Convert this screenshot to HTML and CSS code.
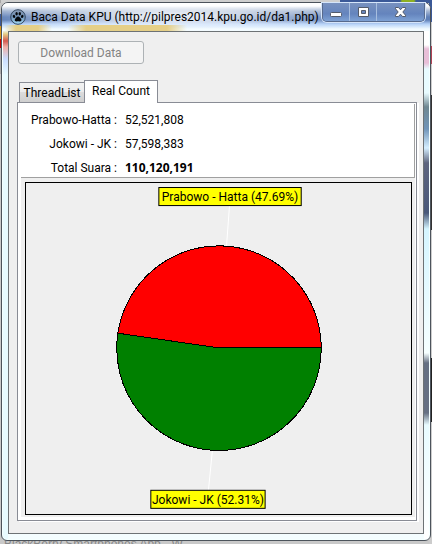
FILE: index.html
```
<!DOCTYPE html>
<html lang="id">
<head>
<meta charset="utf-8">
<title>Baca Data KPU</title>
<link rel="stylesheet" href="styles.css">
</head>
<body>
<div class="backdrop-text">BlackBerry Smartphones App - W</div>
<main class="window">
  <header class="titlebar">
    <svg class="app-icon" viewBox="0 0 16 16" aria-hidden="true">
      <defs><linearGradient id="disc" x1="0" y1="0" x2="0" y2="1"><stop offset="0" stop-color="#8b9cb5"/><stop offset=".5" stop-color="#6f91b8"/><stop offset="1" stop-color="#a8e0fb"/></linearGradient></defs>
      <circle cx="8" cy="8" r="7.3" fill="url(#disc)" stroke="#33475f" stroke-width="1"/>
      <g fill="#05080c"><ellipse cx="4" cy="7.4" rx="1.2" ry="1.6" transform="rotate(-25 4 7.4)"/><ellipse cx="6.6" cy="4.8" rx="1.2" ry="1.8"/><ellipse cx="9.8" cy="4.8" rx="1.2" ry="1.8"/><ellipse cx="12.2" cy="7.4" rx="1.2" ry="1.6" transform="rotate(25 12.2 7.4)"/><path d="M8.1 7.4c1.5 0 1.8 1.3 2.7 2.1 1.3 1.2.6 3.1-.9 2.9-1.3-.3-2.3-.3-3.6 0-1.5.2-2.200-1.700-.9-2.900.9-.8 1.200-2.100 2.700-2.100z"/></g>
    </svg>
    <h1 class="title">Baca Data KPU (http://pilpres2014.kpu.go.id/da1.php)</h1>
    <div class="controls">
      <button class="control" aria-label="Minimize"><svg width="13" height="12" viewBox="0 0 13 12"><rect x=".5" y="6.500" width="11" height="4" rx="1" fill="#fff" stroke="#535b6b"/></svg></button>
      <button class="control" aria-label="Maximize"><svg width="13" height="12" viewBox="0 0 13 12"><path fill="#fff" stroke="#535b6b" fill-rule="evenodd" d="M1.500 1.500h10v9h-10zM4.500 4.500v3h4v-3z"/></svg></button>
      <button class="control close" aria-label="Close"><svg width="13" height="12" viewBox="0 0 13 12"><path fill="#fff" stroke="#535b6b" stroke-linejoin="round" d="M1.500 1.500h3l2 2.300 2-2.300h3v1.300L8.800 6l2.700 3.200v1.300h-3l-2-2.300-2 2.300h-3V9.200L4.200 6 1.500 2.800z"/></svg></button>
    </div>
  </header>
  <section class="client">
    <button class="download" disabled>Download Data</button>
    <div class="tabs" role="tablist">
      <button class="tab" role="tab" aria-selected="false">ThreadList</button>
      <button class="tab active" role="tab" aria-selected="true">Real Count</button>
    </div>
    <div class="panel" role="tabpanel">
      <dl class="totals">
        <dt>Prabowo-Hatta :</dt><dd>52,521,808</dd>
        <dt>Jokowi - JK :</dt><dd>57,598,383</dd>
        <dt>Total Suara :</dt><dd class="sum">110,120,191</dd>
      </dl>
      <div class="chart">
        <svg class="pie" viewBox="0 0 384 330">
          <path class="leader" d="M203 22L200 63M186 266L182 306"/>
          <g class="slices" shape-rendering="crispEdges">
            <path fill="#f00" d="M192.500 164.500H294.500A102 102 0 0 0 91.600 149.800Z"/>
            <path fill="#008000" d="M192.500 164.500L91.600 149.800A102 102 0 1 0 294.500 164.500Z"/>
          </g>
          <rect class="tag" x="132.500" y="4.500" width="142" height="18"/>
          <text class="tag-text" x="203.500" y="18">Prabowo - Hatta (47.69%)</text>
          <rect class="tag" x="124.500" y="306.500" width="114" height="18"/>
          <text class="tag-text" x="181.500" y="320">Jokowi - JK (52.31%)</text>
        </svg>
      </div>
    </div>
  </section>
</main>
</body>
</html>
```
FILE: styles.css
```
* { box-sizing: border-box; }
body {
  margin: 0;
  min-height: 100vh;
  padding: 2px 1px 4px;
  display: flex;
  position: relative;
  overflow: hidden;
  font: 12px/16px Roboto, "Open Sans", sans-serif;
  color: #000;
  background:
    linear-gradient(90deg, #a8a8a8 0 1px, #cfcfcf 1px 340px, #3b5998 340px 400px, #8eb021 402px 414px, #3b5998 416px) right 0 top 0 / 432px 3px no-repeat,
    linear-gradient(#3b5998 0 12px, #d99a20 12px 25px, #c00 25px 34px, #aaa 34px) left 0 top 14px / 3px 60px no-repeat,
    linear-gradient(#3b5998 0 22px, #ccc 22px 46px, #b14355 46px 64px, #ccc 64px 95px, #333 95px 230px, #ccc 230px 358px, #222 358px 422px, #ccc 422px) right / 3px 100% no-repeat,
    #c9c9c9;
}
.backdrop-text {
  position: absolute;
  left: 4px;
  bottom: -7px;
  font-family: "Liberation Sans", sans-serif;
  color: #888;
}
.window {
  flex: 1;
  min-width: 0;
  position: relative;
  display: flex;
  flex-direction: column;
  padding: 0 6px 6px;
  border: 1px solid #4c535b;
  border-radius: 7px 7px 6px 6px;
  box-shadow: inset 0 0 0 1px #f4ffff;
  background:
    linear-gradient(transparent 27px, #e5cf87 31px, #d45a50 38px, #f0b0a8 44px, #c9dcff 56px, #e8fbff 72px) left / 6px 100% no-repeat,
    linear-gradient(#fff 0 42px, #e8bfd8 46px 60px, #e8fbff 66px 90px, #6f8791 104px, #7094b8 126px, #d5eeff 145px, #5e657f 160px, #495879 210px, #d5f5ff 226px, #f6ffff 350px, #667083 360px 410px, #e8fbff 422px, #fff) right / 6px 100% no-repeat,
    #f4fdff;
}
.titlebar {
  display: flex;
  align-items: center;
  height: 28px;
  margin: 0 -6px;
  padding-left: 8px;
  border-radius: 6px 6px 0 0;
  background:
    linear-gradient(90deg, #e5cf8700 2px, #e5cf87 14px 36px, #e5cf8700 50px 66px, #e5cf87 84px 165px, #e5cf8700 185px) left bottom / 100% 6px no-repeat,
    radial-gradient(ellipse 180px 15px at 170px 14px, #ffffffd0 20%, #ffffff00) no-repeat,
    linear-gradient(#fff 0 3px, #a9bad5 8px, #5f80b8 14px 17px, #b5d2f8 21px, #f2fbff 26px);
}
.app-icon { width: 16px; height: 16px; flex: none; }
.title {
  flex: 1;
  min-width: 0;
  margin: 0 0 0 5px;
  font-size: 12px;
  font-weight: 400;
  line-height: 16px;
  white-space: nowrap;
}
.controls {
  position: absolute;
  top: 0;
  right: 5px;
  display: flex;
  height: 19px;
  border: 1px solid #586a8c;
  border-top: 0;
  border-radius: 0 0 5px 5px;
  box-shadow: 0 0 0 1px #d5e5fa;
  overflow: hidden;
}
.control {
  width: 27px;
  padding: 0;
  border: 0;
  border-right: 1px solid #a7bedf;
  background: linear-gradient(#7891bf, #6484bd 60%, #7da1d4);
  display: flex;
  align-items: center;
  justify-content: center;
}
.control.close { width: 47px; border-right: 0; }
.client {
  flex: 1;
  display: flex;
  flex-direction: column;
  padding: 9px 6px 12px 8px;
  border: 1px solid #6d7275;
  background: #efefef;
}
.download {
  align-self: flex-start;
  width: 126px;
  height: 23px;
  margin-left: 1px;
  padding: 0;
  border: 1px solid #adb2b5;
  border-radius: 3px;
  background: #f4f4f4;
  font: inherit;
  color: #838383;
}
.tabs {
  display: flex;
  align-items: flex-end;
  height: 23px;
  margin: 16px 0 -1px 2px;
  z-index: 1;
}
.tab {
  height: 21px;
  width: 65px;
  padding: 0;
  font: inherit;
  color: #000;
  border: 1px solid #898c95;
  border-right: 0;
  background: linear-gradient(#f2f2f2, #ebebeb 50%, #dcdcdc 50%, #cfcfcf);
}
.tab.active {
  height: 23px;
  width: 74px;
  padding-bottom: 2px;
  border-right: 1px solid #898c95;
  border-bottom: 0;
  background: #fff;
}
.panel {
  flex: 1;
  display: flex;
  flex-direction: column;
  padding: 1px 1px 3px 3px;
  border: 1px solid #898c95;
  box-shadow: 2px 1px 0 #fff;
  background: #fff;
}
.totals {
  margin: 0;
  height: 74px;
  padding: 4px 0 0 4px;
  display: grid;
  grid-template-columns: 92px 1fr;
  grid-auto-rows: 24px;
  column-gap: 8px;
  line-height: 24px;
  border: 1px solid #a0a0a0;
  border-width: 0 1px 1px 0;
}
.totals dt { text-align: right; white-space: nowrap; }
.totals dd { margin: 0; }
.totals .sum { font-family: "Open Sans", sans-serif; font-weight: 700; }
.chart {
  flex: 1;
  padding: 4px 3px 2px 4px;
  background: #efefef;
}
.pie { display: block; width: 100%; border: 1px solid #000; }
.slices { stroke: #000; stroke-width: 1; }
.leader { stroke: #fff; fill: none; }
.tag { fill: #ff0; stroke: #000; }
.tag-text { font-size: 12px; text-anchor: middle; }
```
